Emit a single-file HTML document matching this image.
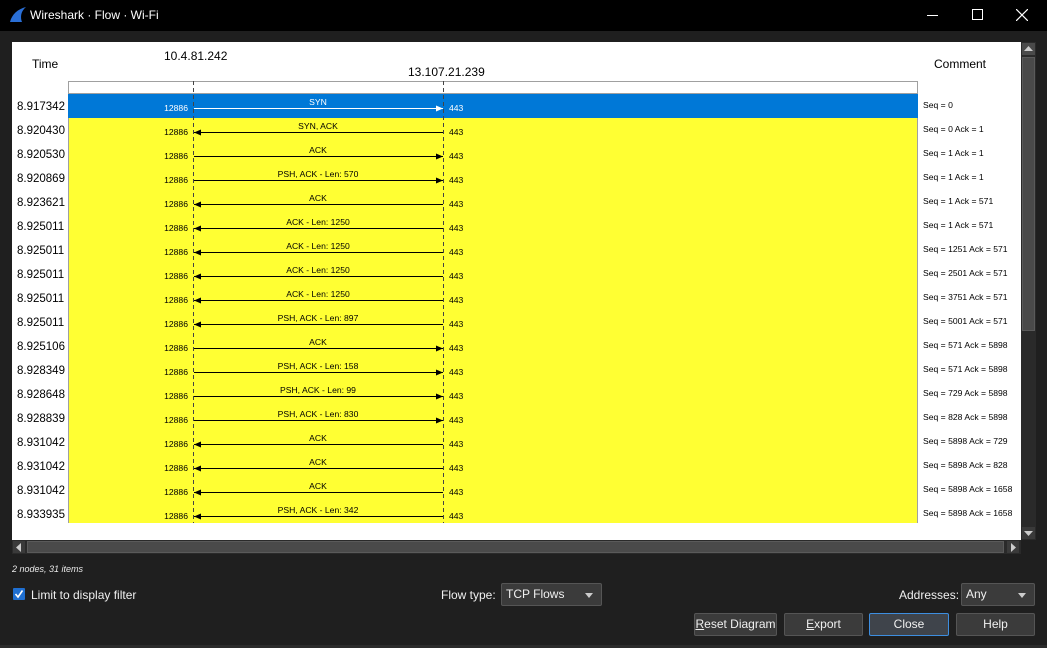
<!DOCTYPE html>
<html><head><meta charset="utf-8">
<style>
*{margin:0;padding:0;box-sizing:border-box}
body{width:1047px;height:648px;background:#1f1f1f;font-family:"Liberation Sans",sans-serif;position:relative;overflow:hidden;color:#fff}
.abs{position:absolute;white-space:nowrap}
.btn{position:absolute;top:613px;height:23px;background:#3b3b3b;border:1px solid #555;border-radius:2px;color:#f0f0f0;font-size:12px;text-align:center;line-height:21px;white-space:nowrap;overflow:hidden}
.combo{position:absolute;top:583px;height:23px;background:#3b3b3b;border:1px solid #555;border-radius:2px;color:#f0f0f0;font-size:12px;line-height:21px;padding-left:4px;white-space:nowrap}
.combo:after{content:"";position:absolute;right:8px;top:9px;border-left:4px solid transparent;border-right:4px solid transparent;border-top:5px solid #ccc}
</style></head><body>
<div class="abs" style="left:0;top:0;width:1047px;height:31px;background:#000"></div>
<svg class="abs" style="left:8px;top:6px" width="20" height="18" viewBox="0 0 20 18"><path d="M2 16 C4 8 10 3 18 1 C13 5 12 11 14 16 Z" fill="#2a6fd6"/></svg>
<div class="abs" style="left:30px;top:8px;font-size:12px;color:#fff">Wireshark · Flow · Wi-Fi</div>
<div class="abs" style="left:927px;top:15px;width:11px;height:1px;background:#fff"></div>
<div class="abs" style="left:972px;top:9px;width:11px;height:11px;border:1px solid #fff"></div>
<svg class="abs" style="left:1016px;top:9px" width="12" height="12"><path d="M0 0L12 12M12 0L0 12" stroke="#fff" stroke-width="1.2"/></svg>

<div class="abs" style="left:12px;top:42px;width:1009px;height:498px;background:#fff"></div>
<svg class="abs" style="left:0;top:0" width="1047" height="560" font-family="Liberation Sans, sans-serif">
<rect x="68.5" y="81.5" width="849" height="12" fill="#fff" stroke="#a0a0a0"/>
<rect x="68" y="94" width="849" height="429" fill="#ffff33"/>
<line x1="68.5" y1="94" x2="68.5" y2="523" stroke="#a0a0a0"/>
<line x1="917.5" y1="94" x2="917.5" y2="523" stroke="#a0a0a0"/>
<rect x="68" y="94" width="850" height="24" fill="#0078d7"/>
<text x="32" y="68" font-size="12" fill="#000">Time</text>
<text x="164" y="60" font-size="12" fill="#000">10.4.81.242</text>
<text x="408" y="76" font-size="12" fill="#000">13.107.21.239</text>
<text x="934" y="68" font-size="12" fill="#000">Comment</text>
<line x1="193.5" y1="81" x2="193.5" y2="523" stroke="#444" stroke-dasharray="4,3"/>
<line x1="443.5" y1="81" x2="443.5" y2="523" stroke="#444" stroke-dasharray="4,3"/>
<g id="rows" font-size="8.6">
</g>
</svg>
<script>
var d=[["8.917342","SYN",1,"Seq = 0"],["8.920430","SYN, ACK",0,"Seq = 0 Ack = 1"],["8.920530","ACK",1,"Seq = 1 Ack = 1"],["8.920869","PSH, ACK - Len: 570",1,"Seq = 1 Ack = 1"],["8.923621","ACK",0,"Seq = 1 Ack = 571"],["8.925011","ACK - Len: 1250",0,"Seq = 1 Ack = 571"],["8.925011","ACK - Len: 1250",0,"Seq = 1251 Ack = 571"],["8.925011","ACK - Len: 1250",0,"Seq = 2501 Ack = 571"],["8.925011","ACK - Len: 1250",0,"Seq = 3751 Ack = 571"],["8.925011","PSH, ACK - Len: 897",0,"Seq = 5001 Ack = 571"],["8.925106","ACK",1,"Seq = 571 Ack = 5898"],["8.928349","PSH, ACK - Len: 158",1,"Seq = 571 Ack = 5898"],["8.928648","PSH, ACK - Len: 99",1,"Seq = 729 Ack = 5898"],["8.928839","PSH, ACK - Len: 830",1,"Seq = 828 Ack = 5898"],["8.931042","ACK",0,"Seq = 5898 Ack = 729"],["8.931042","ACK",0,"Seq = 5898 Ack = 828"],["8.931042","ACK",0,"Seq = 5898 Ack = 1658"],["8.933935","PSH, ACK - Len: 342",0,"Seq = 5898 Ack = 1658"]];
var s="";
d.forEach(function(r,i){var y=94+24*i;var c=i==0?"#fff":"#000";
s+='<text x="17" y="'+(y+16)+'" font-size="11.5" fill="#000">'+r[0]+'</text>';
s+='<text x="188" y="'+(y+17)+'" text-anchor="end" fill="'+c+'">12886</text>';
s+='<text x="449" y="'+(y+17)+'" fill="'+c+'">443</text>';
s+='<text x="318" y="'+(y+11)+'" text-anchor="middle" fill="'+c+'">'+r[1]+'</text>';
s+='<line x1="194" y1="'+(y+14.5)+'" x2="443" y2="'+(y+14.5)+'" stroke="'+c+'"/>';
if(r[2])s+='<path d="M443 '+(y+14.5)+' l-7 -3 v6z" fill="'+c+'"/>';else s+='<path d="M194 '+(y+14.5)+' l7 -3 v6z" fill="'+c+'"/>';
s+='<text x="923" y="'+(y+14)+'" fill="#000">'+r[3]+'</text>';});
document.getElementById("rows").innerHTML=s;
</script>

<div class="abs" style="left:1021px;top:42px;width:15px;height:498px;background:#2a2a2a"></div>
<div class="abs" style="left:1022px;top:43px;width:13px;height:12px;background:#4a4a4a"></div>
<svg class="abs" style="left:1024px;top:46px" width="9" height="6"><path d="M0 5L4.5 0L9 5Z" fill="#ccc"/></svg>
<div class="abs" style="left:1022px;top:57px;width:13px;height:274px;background:#4a4a4a;border:1px solid #5a5a5a"></div>
<div class="abs" style="left:1022px;top:527px;width:13px;height:12px;background:#3a3a3a"></div>
<svg class="abs" style="left:1024px;top:531px" width="9" height="6"><path d="M0 0L4.5 5L9 0Z" fill="#ccc"/></svg>

<div class="abs" style="left:12px;top:540px;width:1009px;height:14px;background:#2a2a2a"></div>
<div class="abs" style="left:13px;top:541px;width:12px;height:12px;background:#3a3a3a"></div>
<svg class="abs" style="left:16px;top:543px" width="6" height="9"><path d="M5 0L0 4.5L5 9Z" fill="#ccc"/></svg>
<div class="abs" style="left:27px;top:541px;width:977px;height:12px;background:#4a4a4a;border:1px solid #5a5a5a"></div>
<div class="abs" style="left:1007px;top:541px;width:12px;height:12px;background:#3a3a3a"></div>
<svg class="abs" style="left:1011px;top:543px" width="6" height="9"><path d="M0 0L5 4.5L0 9Z" fill="#ccc"/></svg>

<div class="abs" style="left:12px;top:564px;font-size:9px;font-style:italic;color:#e8e8e8">2 nodes, 31 items</div>
<div class="abs" style="left:13px;top:588px;width:12px;height:12px;background:#1f6fd1;border-radius:1px"></div>
<svg class="abs" style="left:14px;top:589px" width="10" height="10"><path d="M1.5 5L4 8L8.5 1.5" stroke="#fff" stroke-width="1.6" fill="none"/></svg>
<div class="abs" style="left:31px;top:588px;font-size:12px;color:#f0f0f0">Limit to display filter</div>

<div class="abs" style="left:441px;top:588px;font-size:12px;color:#f0f0f0">Flow type:</div>
<div class="combo" style="left:501px;width:101px">TCP Flows</div>
<div class="abs" style="left:899px;top:588px;font-size:12px;color:#f0f0f0">Addresses:</div>
<div class="combo" style="left:961px;width:74px">Any</div>

<div class="btn" style="left:694px;width:83px"><u>R</u>eset Diagram</div>
<div class="btn" style="left:784px;width:79px"><u>E</u>xport</div>
<div class="btn" style="left:869px;width:80px;border-color:#3d8ee0;background:#3f444b">Close</div>
<div class="btn" style="left:956px;width:79px">Help</div>
<div class="abs" style="left:0;top:645px;width:1047px;height:3px;background:#2b2b2b"></div>
</body></html>
